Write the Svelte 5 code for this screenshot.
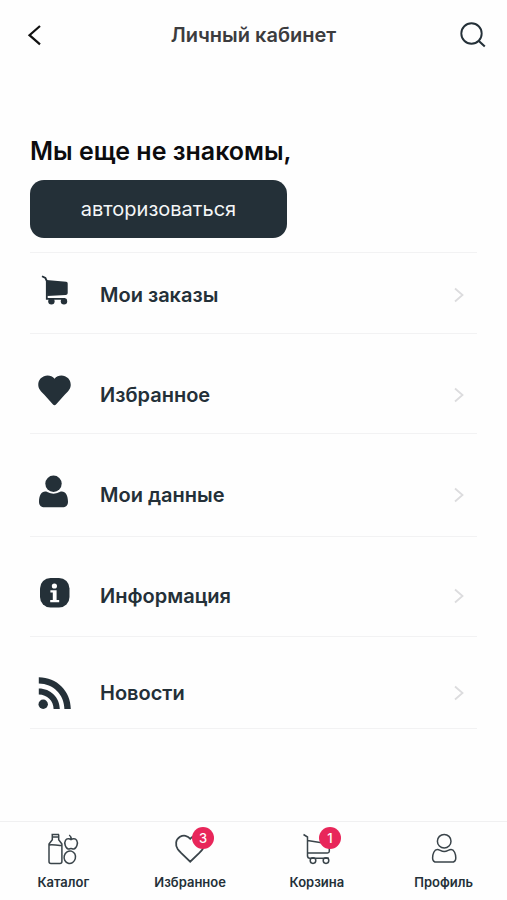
<script lang="ts">
  type Icon = 'cart' | 'heart' | 'user' | 'info' | 'news';

  const menu: { icon: Icon; label: string; href: string; size?: string }[] = [
    { icon: 'cart', label: 'Мои заказы', href: '#orders', size: 'first' },
    { icon: 'heart', label: 'Избранное', href: '#favorites' },
    { icon: 'user', label: 'Мои данные', href: '#profile', size: 'tall' },
    { icon: 'info', label: 'Информация', href: '#info', size: 'even' },
    { icon: 'news', label: 'Новости', href: '#news', size: 'last' }
  ];

  const tabs = [
    { icon: 'catalog', label: 'Каталог', href: '#catalog', count: 0 },
    { icon: 'heart', label: 'Избранное', href: '#favorites', count: 3 },
    { icon: 'cart', label: 'Корзина', href: '#cart', count: 1 },
    { icon: 'user', label: 'Профиль', href: '#profile', count: 0 }
  ];
</script>

<div class="page">
  <header class="topbar">
    <button type="button" class="icon-btn back" aria-label="Назад">
      <svg width="28" height="24" viewBox="0 0 28 24">
        <path d="M20 3 9.5 12.2 20 21.4" stroke-width="2.2" />
      </svg>
    </button>
    <h1>Личный кабинет</h1>
    <button type="button" class="icon-btn" aria-label="Поиск">
      <svg width="28" height="28" viewBox="0 0 28 28">
        <circle cx="12.5" cy="12.5" r="10.2" stroke-width="1.9" />
        <path d="m19.6 19.8 6.2 5.8" stroke-width="2.1" />
      </svg>
    </button>
  </header>

  <main>
    <h2>Мы еще не знакомы,</h2>
    <button type="button" class="login-btn">авторизоваться</button>

    <nav class="menu" aria-label="Личный кабинет">
      {#each menu as item}
        <a class="row {item.size ?? ''}" href={item.href}>
          <svg class="row-icon" width="36" height="36" viewBox="0 0 36 36">
            {#if item.icon === 'cart'}
              <path class="line" d="M5 1.2 8.4 3 9.8 6v17.8H28" />
              <path d="M9.5 5 29.2 6.8a1.8 1.8 0 0 1 1.5 1.8v9.6a2 2 0 0 1-2 1.8l-18.5 1z" />
              <circle cx="14.4" cy="26.2" r="3.2" />
              <circle cx="27" cy="26.2" r="3.2" />
            {:else if item.icon === 'heart'}
              <path d="M17.5 3.8C20 .8 24-.2 28 1.2c5.5 2.1 7.3 8.8 4.3 13.4-1.2 1.9-2.9 3.5-4.6 5.2l-8.5 9.4a2.2 2.2 0 0 1-3.4 0l-8.5-9.4c-1.7-1.7-3.4-3.3-4.6-5.2C-.3 10 1.5 3.3 7 1.2c4-1.4 8-.4 10.5 2.6z" />
            {:else if item.icon === 'user'}
              <circle cx="16.5" cy="8.8" r="8.2" />
              <path d="M8.2 16.6c2.4 0 4.2 2.2 8.3 2.2s5.9-2.2 8.3-2.2c3.8 0 6.2 4 6.2 10.2 0 3.7-2.2 5.5-5.6 5.5H7.6c-3.4 0-5.6-1.8-5.6-5.5 0-6.2 2.4-10.2 6.2-10.2z" />
            {:else if item.icon === 'info'}
              <rect x="3" y="2" width="29.5" height="29.5" rx="10.5" />
              <circle class="light" cx="17.4" cy="10" r="2.6" />
              <path class="light" d="M13.4 14.2h6.2v9.8h2.6v2.2h-9v-2.2h2.6v-7.6h-2.4z" />
            {:else}
              <circle cx="6.2" cy="31.2" r="4.7" />
              <path d="M1.8 15.4c11.8 0 21 9 21 20.6h-6.2c0-8-6.5-14.4-14.8-14.4z" />
              <path d="M1.8 4.2c18 0 32 14 32 31.8h-6.4C27.4 21.8 16.2 10.4 1.8 10.4z" />
            {/if}
          </svg>
          <span class="row-label">{item.label}</span>
          <svg class="chevron" width="12" height="18" viewBox="0 0 12 18">
            <path d="M2 2.5 9.5 9 2 15.5" />
          </svg>
        </a>
      {/each}
    </nav>
  </main>

  <nav class="tabbar" aria-label="Основное меню">
    {#each tabs as tab}
      <a class="tab" href={tab.href}>
        <span class="tab-icon">
          <svg width="32" height="32" viewBox="0 0 32 32">
            {#if tab.icon === 'catalog'}
              <path d="M4.5 1.5H12M5 4h7M5.3 1.5v5.2L2 11v17.5a2 2 0 0 0 2 2h8.9a2 2 0 0 0 2-2V11l-3.2-4.3V1.5M2.2 12c4-1 8 1 12.6.3" />
              <path d="M24 6.6c-1.6-1.3-4.3-1.2-5.5.7-1.7 2.6.1 8.2 2.9 8.7 1 .2 1.7-.5 2.6-.5s1.7.7 2.7.5c2.9-.5 4.7-6.1 3-8.7-1.3-1.9-4-2-5.7-.7zM24.2 6.5c0-2-.5-3.5-2-4.5" />
              <ellipse cx="22.8" cy="24.2" rx="5.7" ry="6.3" transform="rotate(15 22.8 24.2)" />
            {:else if tab.icon === 'heart'}
              <path class="bold" d="M16.2 5.8C13.8 2.5 9.5 1.7 6 3.8 1.6 6.5.9 12 3.8 16.3c1 1.4 2.2 2.6 3.5 3.9l8.9 8.5 8.9-8.5c1.3-1.3 2.5-2.5 3.5-3.9 2.9-4.3 2.2-9.8-2.2-12.5-3.5-2.1-7.8-1.3-10.2 2z" />
            {:else if tab.icon === 'cart'}
              <path d="M2.5 1.5 6.5 4v19.5M6.5 7.5 27 10.7a1.6 1.6 0 0 1 1.3 1.7v5.8a1.8 1.8 0 0 1-1.8 1.7h-20M6.5 22.5c0 2 .8 2.8 2.3 2.8H28" />
              <circle cx="12" cy="27.6" r="2.8" />
              <circle cx="25" cy="27.6" r="2.8" />
            {:else}
              <circle cx="16.2" cy="8.2" r="6.8" />
              <path d="M9.3 16.5c2.6 0 3.5 2 6.9 2s4.3-2 6.9-2c3 0 4.7 4.5 4.7 8.4 0 2.8-1.5 4.2-4.2 4.2H8.8c-2.7 0-4.2-1.4-4.2-4.2 0-3.9 1.7-8.4 4.7-8.4z" />
            {/if}
          </svg>
          {#if tab.count > 0}
            <span class="badge">{tab.count}</span>
          {/if}
        </span>
        <span>{tab.label}</span>
      </a>
    {/each}
  </nav>
</div>

<style>
  :global(body) {
    background: #fefefe;
  }

  .page {
    --dark: #243038;
    display: flex;
    flex-direction: column;
    min-height: 100vh;
    font-family: Inter, "Liberation Sans", sans-serif;
    color: var(--dark);
  }

  a {
    color: inherit;
    text-decoration: none;
  }

  button {
    font-family: inherit;
    border: none;
    cursor: pointer;
  }

  h1,
  h2 {
    margin: 0;
    font-weight: 600;
  }

  .topbar {
    display: grid;
    grid-template-columns: 28px 1fr 28px;
    align-items: center;
    height: 70px;
    padding: 0 20px;
  }

  h1 {
    font-size: 20px;
    line-height: 24px;
    text-align: center;
    color: #3c3c3e;
  }

  .icon-btn {
    display: flex;
    padding: 0;
    background: none;
  }

  .icon-btn svg {
    fill: none;
    stroke: var(--dark);
  }

  .icon-btn.back svg {
    stroke: #111;
  }

  main {
    flex: 1;
    padding: 66px 30px 40px;
  }

  h2 {
    font-size: 25px;
    line-height: 30px;
    color: #0c0c0e;
  }

  .login-btn {
    display: block;
    width: 257px;
    max-width: 100%;
    height: 58px;
    margin: 14px 0;
    border-radius: 14px;
    background: var(--dark);
    color: #f4f6f7;
    font-size: 20px;
    line-height: 24px;
  }

  .menu {
    border-top: 1px solid #f2f2f3;
  }

  .row {
    display: flex;
    align-items: center;
    height: 40px;
    padding: 41px 12px 18px 7px;
    border-bottom: 1px solid #f2f2f3;
  }

  .row.first {
    padding-top: 22px;
  }

  .row.tall {
    padding-bottom: 21px;
  }

  .row.even {
    padding-top: 39px;
    padding-bottom: 20px;
  }

  .row.last {
    padding-top: 36px;
    padding-bottom: 15px;
  }

  .row-icon {
    align-self: flex-start;
    fill: var(--dark);
  }

  .row-icon .line {
    fill: none;
    stroke: var(--dark);
    stroke-width: 1.8;
  }

  .row-icon .light {
    fill: #fff;
  }

  .row-label {
    flex: 1;
    margin-left: 27px;
    font-size: 20px;
    font-weight: 600;
    line-height: 24px;
  }

  .chevron {
    fill: none;
    stroke: #dcdcde;
    stroke-width: 1.8;
  }

  .tabbar {
    display: grid;
    grid-template-columns: repeat(4, 1fr);
    border-top: 1px solid #f0f0f1;
  }

  .tab {
    display: flex;
    flex-direction: column;
    align-items: center;
    gap: 9px;
    padding: 11px 0 10px;
    font-size: 13px;
    font-weight: 600;
    line-height: 16px;
  }

  .tab-icon {
    position: relative;
    height: 32px;
  }

  .tab-icon svg {
    fill: none;
    stroke: #3a444a;
    stroke-width: 1.5;
  }

  .tab-icon .bold {
    stroke-width: 1.8;
  }

  .badge {
    position: absolute;
    top: -6px;
    left: 18px;
    width: 22px;
    height: 22px;
    border-radius: 50%;
    background: #e8265a;
    color: #fff;
    font-size: 13px;
    font-weight: 500;
    line-height: 22px;
    text-align: center;
  }
</style>
